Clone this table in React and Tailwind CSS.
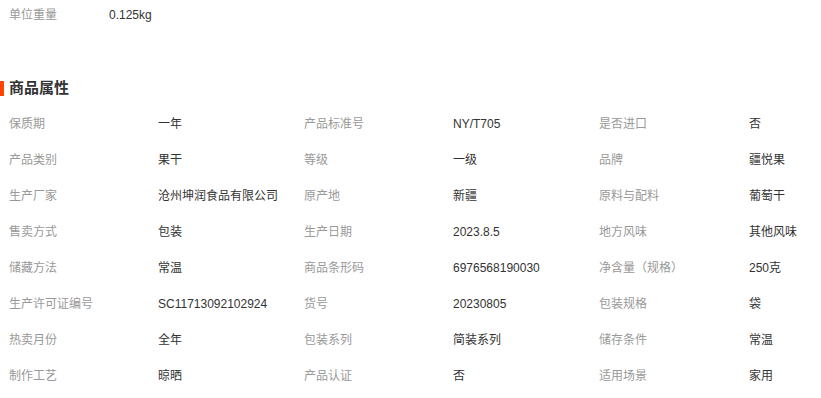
const font = { fontFamily: '"Liberation Sans", "Noto Sans CJK SC", sans-serif' };

const attrs = [
  ['保质期', '一年', '产品标准号', 'NY/T705', '是否进口', '否'],
  ['产品类别', '果干', '等级', '一级', '品牌', '疆悦果'],
  ['生产厂家', '沧州坤润食品有限公司', '原产地', '新疆', '原料与配料', '葡萄干'],
  ['售卖方式', '包装', '生产日期', '2023.8.5', '地方风味', '其他风味'],
  ['储藏方法', '常温', '商品条形码', '6976568190030', '净含量（规格）', '250克'],
  ['生产许可证编号', 'SC11713092102924', '货号', '20230805', '包装规格', '袋'],
  ['热卖月份', '全年', '包装系列', '简装系列', '储存条件', '常温'],
  ['制作工艺', '晾晒', '产品认证', '否', '适用场景', '家用'],
];

export default function App() {
  return (
    <div className="w-[821px] h-[398px] bg-white overflow-hidden text-[12px]" style={font}>
      {/* weight */}
      <div className="flex items-center h-[30px] pl-[9px]">
        <span className="w-[100px] text-[#999]">单位重量</span>
        <span className="text-[#333]">0.125kg</span>
      </div>

      {/* heading */}
      <div className="flex items-center h-[20px] mt-[48px]">
        <div className="w-[4px] h-[15px] bg-[#ff4400]"></div>
        <h2 className="ml-[5px] text-[15px] font-bold text-[#333] leading-[20px]">商品属性</h2>
      </div>

      {/* attribute grid */}
      <div className="mt-[8px] pl-[9px] grid grid-cols-[149px_146px_149px_146px_150px_1fr]">
        {attrs.map((row, i) =>
          row.map((cell, j) => (
            <div
              key={`${i}-${j}`}
              className={`h-[36px] flex items-center whitespace-nowrap ${j % 2 === 0 ? 'text-[#999]' : 'text-[#333]'}`}
            >
              {cell}
            </div>
          ))
        )}
      </div>
    </div>
  );
}
